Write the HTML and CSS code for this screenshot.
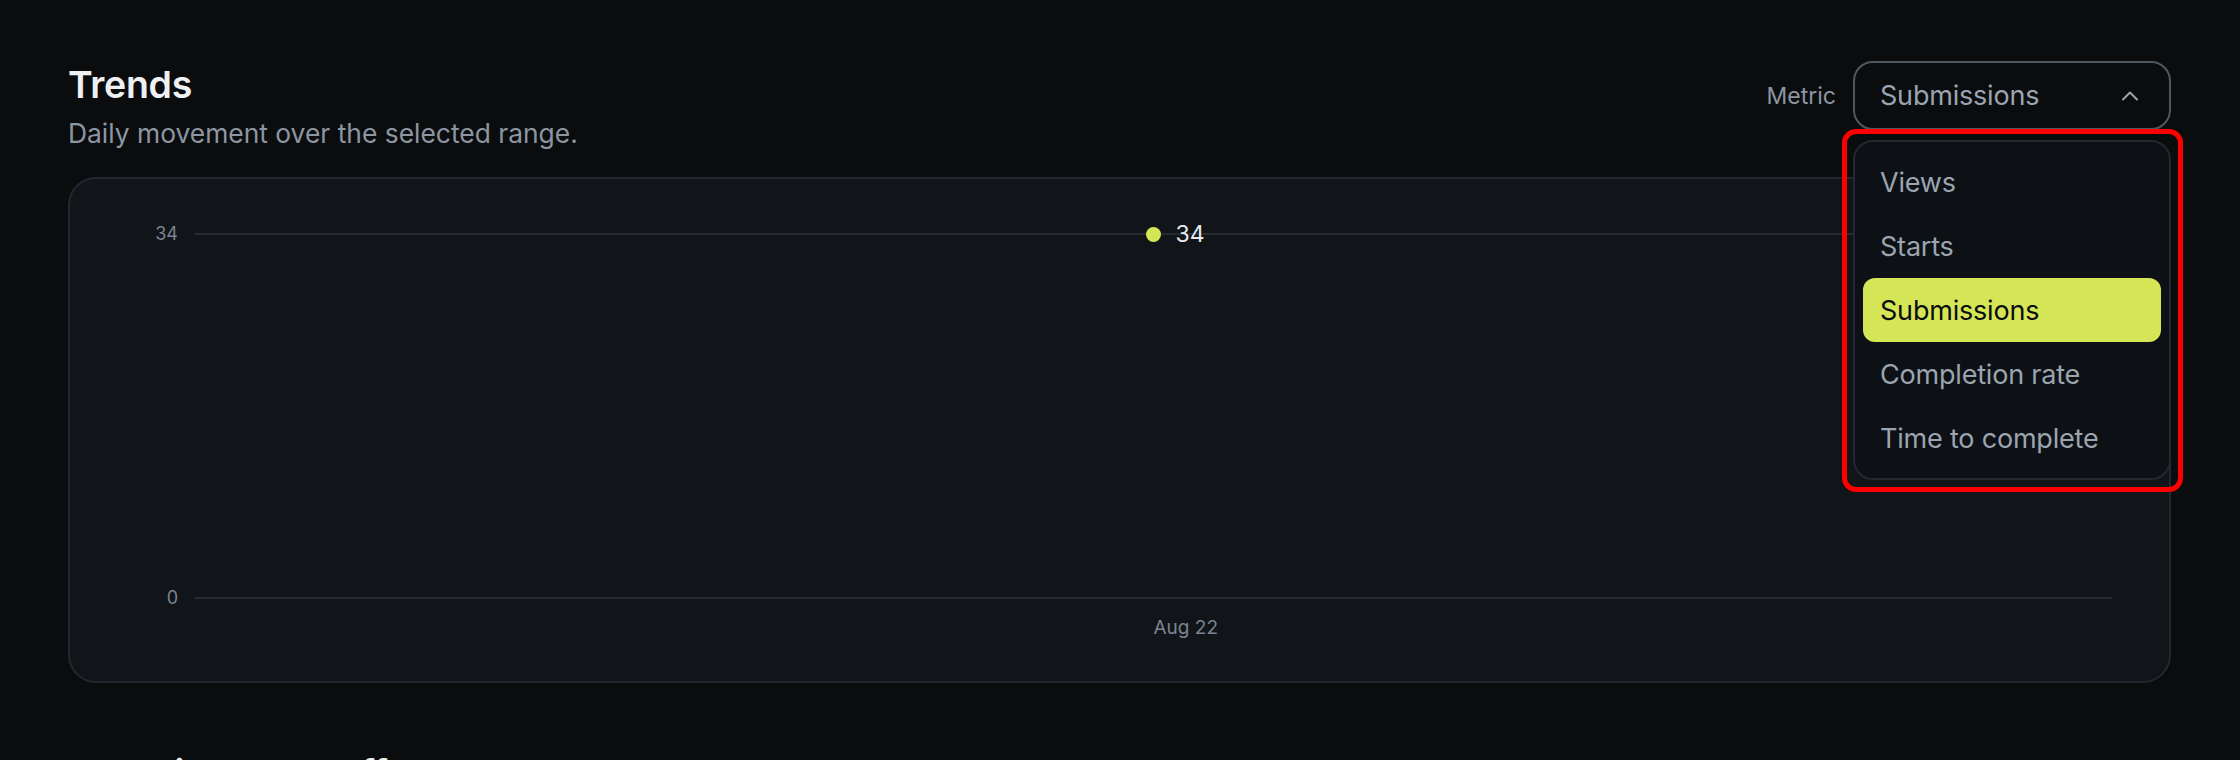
FILE: index.html
```html
<!DOCTYPE html>
<html lang="en">
<head>
<meta charset="utf-8">
<title>Trends</title>
<link rel="stylesheet" href="styles.css">
</head>
<body>
<main class="page">
  <section class="section">
    <header class="section-head">
      <div class="titles">
        <h2 class="title">Trends</h2>
        <p class="subtitle">Daily movement over the selected range.</p>
      </div>
      <div class="metric">
        <span class="metric-label">Metric</span>
        <div class="select-wrap">
          <button class="select" type="button">
            <span class="select-value">Submissions</span>
            <svg class="chevron" width="18" height="11" viewBox="0 0 18 11" aria-hidden="true"><path d="M2 9.5 L9 2.5 L16 9.5" fill="none" stroke="currentColor" stroke-width="2" stroke-linecap="round" stroke-linejoin="round"/></svg>
          </button>
          <ul class="menu">
            <li class="menu-item">Views</li>
            <li class="menu-item">Starts</li>
            <li class="menu-item is-active">Submissions</li>
            <li class="menu-item">Completion rate</li>
            <li class="menu-item">Time to complete</li>
          </ul>
        </div>
      </div>
    </header>
    <div class="card">
      <div class="chart">
        <div class="ticks">
          <span class="tick">34</span>
          <span class="tick">0</span>
        </div>
        <div class="plot">
          <span class="point" style="left: 50%; top: 0%;"></span>
          <span class="point-label" style="left: 50%; top: 0%;">34</span>
          <span class="x-label" style="left: 50%;">Aug 22</span>
        </div>
      </div>
    </div>
  </section>
  <section class="section next">
    <h2 class="title">Question drop-off</h2>
  </section>
</main>
</body>
</html>
```

FILE: styles.css
```css
* { box-sizing: border-box; }
html, body {
  margin: 0;
  padding: 0;
  background: #0b0c0e;
  font-family: Inter, "Noto Sans", "Liberation Sans", sans-serif;
  color: #eef0f3;
  overflow: hidden;
}
.page {
  padding: 61px 69px 0 68px;
}
.section-head {
  display: flex;
  justify-content: space-between;
  align-items: flex-start;
}
.title {
  margin: 0;
  font-size: 37.5px;
  line-height: 48px;
  font-weight: 600;
  letter-spacing: -0.3px;
  color: #eef0f3;
}
.subtitle {
  margin: 6px 0 0;
  font-size: 26.4px;
  line-height: 36px;
  color: #8c96a2;
  letter-spacing: 0;
}
.metric {
  display: flex;
  align-items: center;
  gap: 17px;
}
.metric-label {
  font-size: 23px;
  color: #8c96a2;
}
.select-wrap {
  position: relative;
  width: 318px;
}
.select {
  display: flex;
  align-items: center;
  justify-content: space-between;
  width: 100%;
  height: 69px;
  padding: 0 30px 0 25px;
  background: #0b0c0e;
  border: 2px solid #4f5761;
  border-radius: 20px;
  font-family: inherit;
  font-size: 27px;
  color: #9ba5b0;
  letter-spacing: -0.2px;
}
.chevron { color: #9ba5b0; }
.menu {
  position: absolute;
  top: 79px;
  left: 0;
  right: 0;
  margin: 0;
  padding: 8px 8px;
  list-style: none;
  background: #0d1014;
  border: 2px solid #23282f;
  border-radius: 20px;
  z-index: 5;
}
.menu::after {
  content: "";
  position: absolute;
  top: -13px;
  left: -13px;
  right: -14px;
  bottom: -14px;
  border: 5px solid #ff0000;
  border-radius: 14px;
  pointer-events: none;
}
.menu-item {
  height: 64px;
  display: flex;
  align-items: center;
  padding-left: 17px;
  font-size: 27px;
  color: #9ba5b0;
  letter-spacing: -0.2px;
  border-radius: 12px;
}
.menu-item.is-active {
  background: #d4e656;
  color: #0b0c0e;
}
.card {
  margin-top: 26px;
  height: 506px;
  background: #111418;
  border: 2px solid #23282f;
  border-radius: 28px;
  padding: 54px 57px 0 0;
}
.chart {
  display: grid;
  grid-template-columns: 108px 1fr;
  column-gap: 17px;
}
.ticks {
  display: flex;
  flex-direction: column;
  justify-content: space-between;
  align-items: flex-end;
  padding: 1px 0;
}
.tick {
  font-size: 18px;
  line-height: 0;
  color: #7b8591;
}
.plot {
  position: relative;
  height: 366px;
  border-top: 2px solid #262b32;
  border-bottom: 2px solid #262b32;
}
.point {
  position: absolute;
  width: 15px;
  height: 15px;
  margin: -8.5px 0 0 -7.5px;
  border-radius: 50%;
  background: #d4e656;
}
.point-label {
  position: absolute;
  margin: -1px 0 0 22px;
  font-size: 23px;
  line-height: 0;
  color: #e6e9ed;
}
.x-label {
  position: absolute;
  top: calc(100% + 19px);
  font-size: 19px;
  line-height: 24px;
  color: #7b8591;
}
.next {
  margin-top: 67px;
}
```
